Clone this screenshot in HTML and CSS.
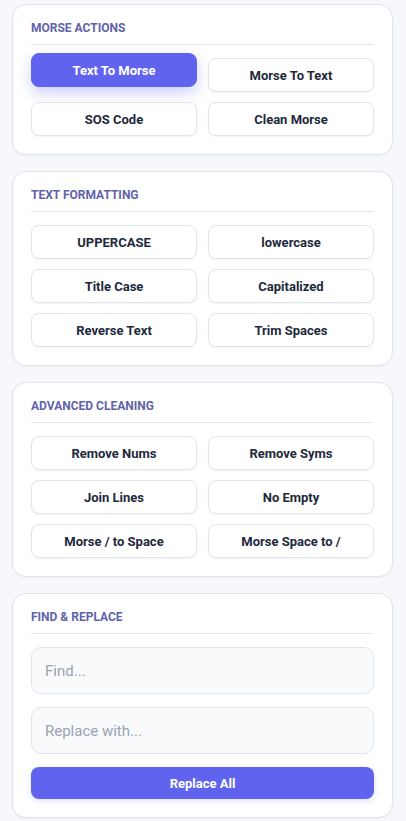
FILE: index.html
```html
<!DOCTYPE html>
<html lang="en">
<head>
<meta charset="utf-8">
<title>Morse Tools</title>
<link rel="stylesheet" href="styles.css">
</head>
<body>
<main class="panel">
  <section class="card">
    <h2 class="card-title">MORSE ACTIONS</h2>
    <div class="grid">
      <button class="btn btn-active">Text To Morse</button>
      <button class="btn">Morse To Text</button>
      <button class="btn">SOS Code</button>
      <button class="btn">Clean Morse</button>
    </div>
  </section>
  <section class="card">
    <h2 class="card-title">TEXT FORMATTING</h2>
    <div class="grid">
      <button class="btn">UPPERCASE</button>
      <button class="btn">lowercase</button>
      <button class="btn">Title Case</button>
      <button class="btn">Capitalized</button>
      <button class="btn">Reverse Text</button>
      <button class="btn">Trim Spaces</button>
    </div>
  </section>
  <section class="card">
    <h2 class="card-title">ADVANCED CLEANING</h2>
    <div class="grid">
      <button class="btn">Remove Nums</button>
      <button class="btn">Remove Syms</button>
      <button class="btn">Join Lines</button>
      <button class="btn">No Empty</button>
      <button class="btn">Morse / to Space</button>
      <button class="btn">Morse Space to /</button>
    </div>
  </section>
  <section class="card">
    <h2 class="card-title">FIND &amp; REPLACE</h2>
    <div class="stack">
      <input class="field" type="text" placeholder="Find...">
      <input class="field" type="text" placeholder="Replace with...">
      <button class="btn-primary">Replace All</button>
    </div>
  </section>
</main>
</body>
</html>
```
FILE: styles.css
```css
* { box-sizing: border-box; }
html, body { margin: 0; }
body {
  background: #f6f8fb;
  font-family: Roboto, "Liberation Sans", sans-serif;
  color: #1e293b;
}
.panel {
  display: flex;
  flex-direction: column;
  gap: 16px;
  padding: 4px 13px 20px 12px;
}
.card {
  background: #ffffff;
  border: 1px solid #dfe4ec;
  border-radius: 14px;
  padding: 16px 18px 18px;
  box-shadow: 0 1px 3px rgba(15, 23, 42, 0.04);
}
.card-title {
  margin: 0 0 13px;
  padding-bottom: 8px;
  border-bottom: 1px solid #e2e8f0;
  font-size: 12px;
  line-height: 15px;
  font-weight: 700;
  color: #6163aa;
}
.grid {
  display: grid;
  grid-template-columns: 1fr 1fr;
  column-gap: 11px;
  row-gap: 10px;
}
.btn {
  height: 34px;
  border: 1px solid #e0e5ec;
  border-radius: 8px;
  background: #ffffff;
  font-family: inherit;
  font-size: 13px;
  font-weight: 700;
  color: #1e293b;
  box-shadow: 0 1px 2px rgba(15, 23, 42, 0.05);
  padding: 0 6px;
}
.btn-active {
  background: #6063ee;
  border-color: #6063ee;
  color: #ffffff;
  transform: translateY(-5px);
  box-shadow: 0 6px 14px rgba(99, 102, 241, 0.3);
}
.stack {
  display: flex;
  flex-direction: column;
  gap: 13px;
}
.field {
  height: 47px;
  border: 1px solid #e0e5ec;
  border-radius: 10px;
  background: #f8fafc;
  padding: 0 13px;
  font-family: inherit;
  font-size: 15px;
  color: #1e293b;
  outline: none;
}
.field::placeholder { color: #9aa3b2; }
.btn-primary {
  height: 32px;
  border: none;
  border-radius: 8px;
  background: #6063ee;
  color: #ffffff;
  font-family: inherit;
  font-size: 13px;
  font-weight: 700;
  box-shadow: 0 2px 6px rgba(99, 102, 241, 0.2);
}
```
